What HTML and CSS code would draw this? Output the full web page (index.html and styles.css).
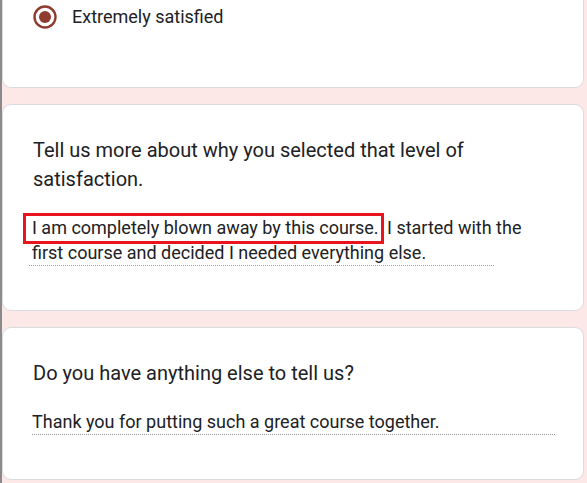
FILE: index.html
```html
<!DOCTYPE html>
<html>
<head>
<meta charset="utf-8">
<link rel="stylesheet" href="styles.css">
</head>
<body>
<div class="page">
  <section class="card card-top">
    <div class="radio-row">
      <svg class="radio" width="24" height="24" viewBox="0 0 24 24">
        <circle cx="12" cy="12" r="10.5" fill="none" stroke="#8f3b32" stroke-width="2.4"/>
        <circle cx="12" cy="12" r="6" fill="#8f3b32"/>
      </svg>
      <span class="radio-label">Extremely satisfied</span>
    </div>
  </section>
  <section class="card">
    <div class="question">Tell us more about why you selected that level of satisfaction.</div>
    <div class="answer answer-long"><span class="hl">I am completely blown away by this course.</span> I started with the first course and decided I needed everything else.</div>
  </section>
  <section class="card">
    <div class="question">Do you have anything else to tell us?</div>
    <div class="answer answer-wide">Thank you for putting such a great course together.</div>
  </section>
</div>
</body>
</html>
```

FILE: styles.css
```css
html, body {
  margin: 0;
  padding: 0;
}
body {
  background: #fce8e6;
  font-family: Roboto, "Liberation Sans", sans-serif;
  color: #202124;
  width: 587px;
  height: 483px;
  overflow: hidden;
}
.page {
  border-left: 2px solid #8a8a8a;
  min-height: 483px;
  box-sizing: border-box;
  padding-right: 3px;
  display: flex;
  flex-direction: column;
  gap: 16px;
}
.card {
  background: #fff;
  border: 1px solid #dadce0;
  border-radius: 9px;
  padding: 31px 29px 44px 30px;
}
.card-top {
  border-top: none;
  border-top-left-radius: 0;
  border-top-right-radius: 0;
  height: 88px;
  box-sizing: border-box;
  padding: 5px 0 0 30px;
}
.radio-row {
  display: flex;
  align-items: center;
  gap: 15px;
}
.radio {
  display: block;
  flex: none;
}
.radio-label {
  font-size: 18px;
  line-height: 24px;
}
.question {
  font-size: 20px;
  line-height: 29px;
  width: 460px;
}
.answer {
  margin-top: 21px;
  margin-left: -1px;
  font-size: 18px;
  line-height: 25px;
}
.answer::after {
  content: "";
  display: block;
  border-bottom: 1px dotted #9a9a9a;
}
.answer-long {
  width: 500px;
  margin-right: -20px;
}
.answer-long::after {
  width: 465px;
  margin-left: -3px;
}
.answer-wide::after {
  width: 523px;
}
.hl {
  border: 3px solid #e8141e;
  padding: 1px 2px 3px 6px;
  margin-left: -9px;
  margin-right: -1px;
}
```
